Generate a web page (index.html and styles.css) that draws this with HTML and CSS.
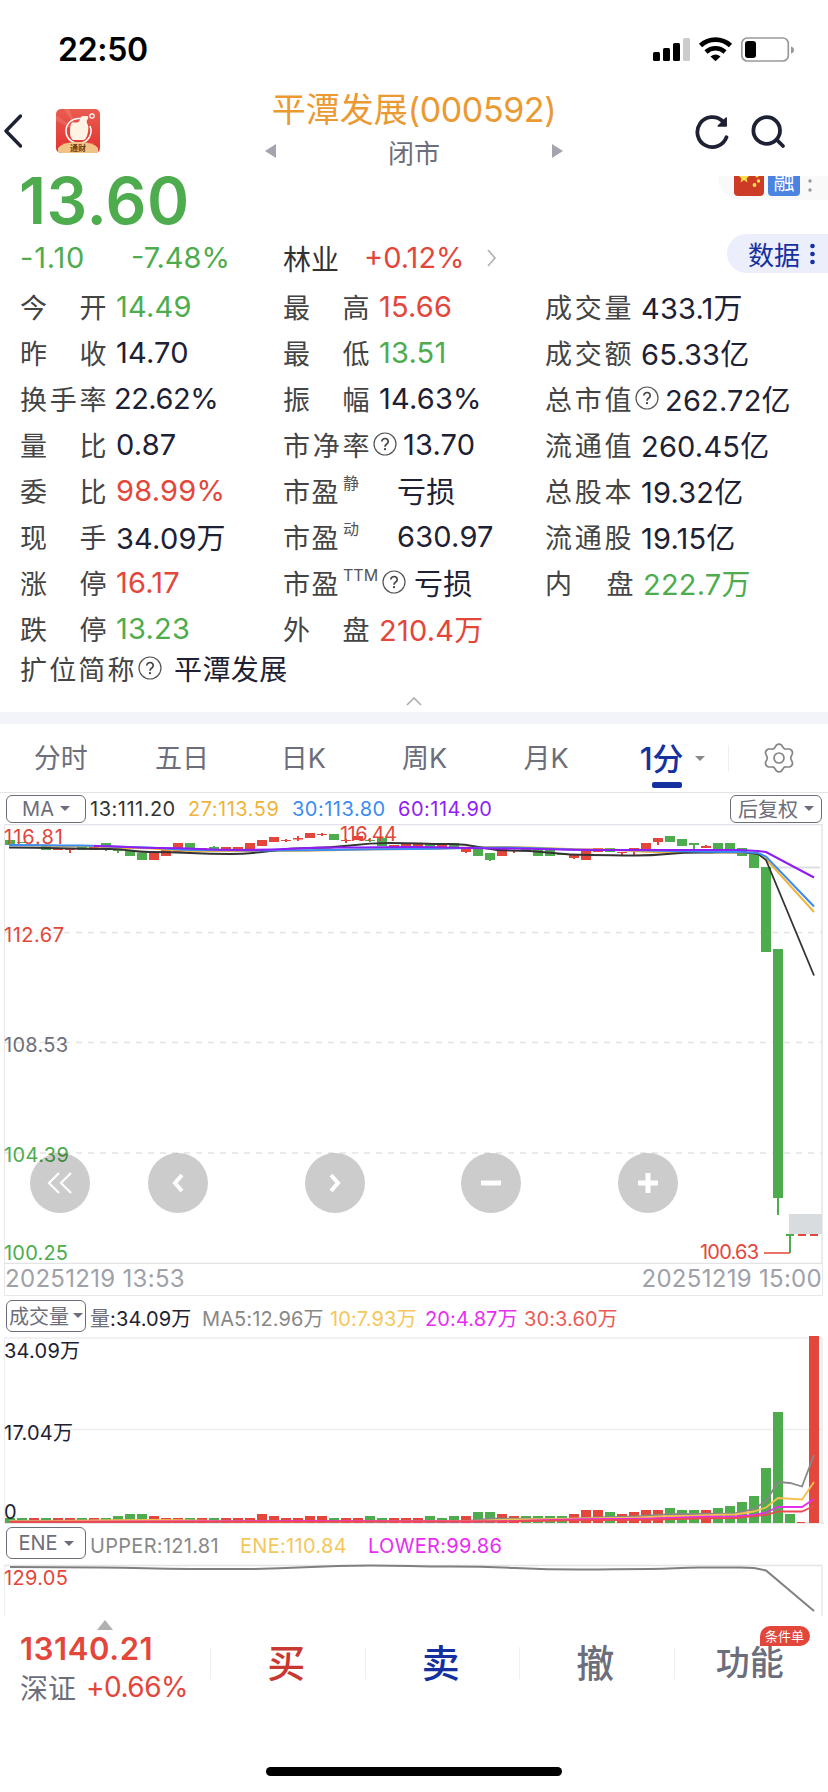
FILE: index.html
```
<!DOCTYPE html>
<html lang="zh-CN">
<head>
    <meta charset="UTF-8">
    <meta name="viewport" content="width=device-width, initial-scale=1.0">
    <title>平潭发展(000592)</title>
    <link rel="stylesheet" href="styles.css">
</head>
<body>
    <svg width="0" height="0" class="defs">
        <symbol id="help" viewBox="0 0 24 24">
            <circle cx="12" cy="12" r="11" fill="none" stroke="#555" stroke-width="1.2"/>
            <path d="M8.8 9.6a3.2 3 0 1 1 5 2.4c-1.2.8-1.8 1.3-1.8 2.7" fill="none" stroke="#444" stroke-width="1.7"/>
            <circle cx="12" cy="17.2" r="1.15" fill="#444"/>
        </symbol>
    </svg>

    <!-- 状态栏 -->
    <div class="status-bar">
        <span class="clock">22:50</span>
        <svg class="status-icons" width="142" height="26" viewBox="0 0 142 26">
            <rect x="0" y="15" width="7" height="9" rx="1.5"/>
            <rect x="10" y="11" width="7" height="13" rx="1.5"/>
            <rect x="20" y="6" width="7" height="18" rx="1.5"/>
            <rect x="30" y="1" width="7" height="23" rx="1.5" fill="#ccc"/>
            <path d="M47.5 8.5a22 22 0 0 1 30 0" fill="none" stroke="#000" stroke-width="4.8"/>
            <path d="M53 15a14 14 0 0 1 19 0" fill="none" stroke="#000" stroke-width="4.5"/>
            <path d="M57.5 19.5q5-4 10 0l-5 4.8z"/>
            <rect x="88.8" y="1" width="46.5" height="23" rx="5.5" fill="none" stroke="#999" stroke-width="1.7"/>
            <rect x="92" y="4" width="11" height="17" rx="3"/>
            <path d="M138 9.5q3 1 3 3.5t-3 3.5z" fill="#999"/>
        </svg>
    </div>

    <!-- 顶部导航 -->
    <header class="nav">
        <div class="nav-left">
            <svg class="back" width="20" height="36" viewBox="0 0 20 36">
                <path d="M18.5 3L4 18l14.5 15" fill="none" stroke="#1d2133" stroke-width="3.4" stroke-linecap="round" stroke-linejoin="round"/>
            </svg>
            <svg class="logo" width="44" height="44" viewBox="0 0 44 44">
                <defs>
                    <linearGradient id="lg" x1="0" y1="0" x2="0" y2="1">
                        <stop offset="0" stop-color="#ea5b50"/><stop offset="1" stop-color="#e2322f"/>
                    </linearGradient>
                    <clipPath id="lc"><rect width="44" height="44" rx="5"/></clipPath>
                </defs>
                <g clip-path="url(#lc)">
                    <rect width="44" height="44" fill="url(#lg)"/>
                    <path d="M22 22L8 0h5zM22 22L0 12v-6z" fill="#fff" opacity=".12"/>
                    <path d="M24 9.5A12.5 12.5 0 1 0 34 17" fill="none" stroke="#fff" stroke-width="1.5"/>
                    <path d="M16 13.500h5q3-.5 3-4 .5-2.500 3-2.500h4q2 .5 1 2.500-2 2-1 5 2 2 1 8-1 7-4 8.500H17q-3-2-3-8 0-8 2-9.500z" fill="#fff3e6"/>
                    <circle cx="36" cy="7" r="2.2" fill="none" stroke="#fff" stroke-width="1.2"/>
                    <path d="M2 44V39q4-6 20-6t20 6v5z" fill="#f0c486"/>
                    <text x="22" y="41.5" class="logo-text">通财</text>
                </g>
            </svg>
        </div>
        <div class="nav-title">
            <h1>平潭发展<span>(000592)</span></h1>
            <div class="nav-sub">
                <svg width="12" height="16" viewBox="0 0 12 16"><path d="M11 1v14L0 8z" fill="#a3a4ad"/></svg>
                <span>闭市</span>
                <svg width="12" height="16" viewBox="0 0 12 16"><path d="M1 1v14L12 8z" fill="#a3a4ad"/></svg>
            </div>
        </div>
        <div class="nav-right">
            <svg width="36" height="36" viewBox="0 0 36 36" fill="none" stroke="#1d2133" stroke-width="3.8" stroke-linecap="round">
                <path d="M32.5 23.2A15 15 0 1 1 28.5 7"/>
                <path d="M32.2 4v8h-8z" fill="#1d2133" stroke-width="1.5" stroke-linejoin="round"/>
            </svg>
            <svg width="36" height="36" viewBox="0 0 36 36" fill="none" stroke="#1d2133" stroke-width="3.8" stroke-linecap="round">
                <circle cx="16.7" cy="16.5" r="13.3"/><path d="M27 26l6 6"/>
            </svg>
        </div>
    </header>

    <!-- 报价 -->
    <section class="quote">
        <div class="price-row">
            <div class="price">13.60</div>
            <div class="tags">
                <svg width="30" height="20" viewBox="0 0 30 20">
                    <path d="M0 0h30v16q0 4-4 4H4q-4 0-4-4z" fill="#cd3a26"/>
                    <path d="M10 -4l1.5 4h3.5l-2.5 2.5 1 4-3.5-2.5-3.5 2.5 1-4L5 0h3.500z" fill="#ffe14d"/>
                    <circle cx="20.5" cy="9" r="1.9" fill="#ffe14d"/><circle cx="24.5" cy="5" r="1.7" fill="#ffe14d"/><circle cx="23" cy="0" r="1.6" fill="#ffe14d"/>
                </svg>
                <span class="tag-rong"><i>融</i></span>
                <svg width="6" height="20" viewBox="0 0 6 20" fill="#999"><circle cx="3" cy="5" r="1.7"/><circle cx="3" cy="14" r="1.7"/></svg>
            </div>
        </div>
        <div class="change-row">
            <span class="chg green">-1.10</span>
            <span class="pct green">-7.48%</span>
            <span class="industry">林业</span>
            <span class="ind-pct red">+0.12%</span>
            <svg width="10" height="18" viewBox="0 0 10 18"><path d="M1 1l7 8-7 8" fill="none" stroke="#b5b5b5" stroke-width="1.8"/></svg>
            <span class="data-btn">数据<svg width="7" height="22" viewBox="0 0 7 22" fill="#15309f"><circle cx="3.5" cy="3" r="2.3"/><circle cx="3.5" cy="11" r="2.3"/><circle cx="3.5" cy="19" r="2.3"/></svg></span>
        </div>
        <div class="grid">
            <div class="cell"><label>今 开</label><b class="green">14.49</b></div>
            <div class="cell"><label>最 高</label><b class="red">15.66</b></div>
            <div class="cell"><label>成交量</label><b>433.1万</b></div>

            <div class="cell"><label>昨 收</label><b>14.70</b></div>
            <div class="cell"><label>最 低</label><b class="green">13.51</b></div>
            <div class="cell"><label>成交额</label><b>65.33亿</b></div>

            <div class="cell"><label>换手率</label><b class="tight">22.62%</b></div>
            <div class="cell"><label>振 幅</label><b>14.63%</b></div>
            <div class="cell"><label>总市值</label><svg class="help"><use href="#help"/></svg><b>262.72亿</b></div>

            <div class="cell"><label>量 比</label><b>0.87</b></div>
            <div class="cell"><label>市净率</label><svg class="help"><use href="#help"/></svg><b>13.70</b></div>
            <div class="cell"><label>流通值</label><b>260.45亿</b></div>

            <div class="cell"><label>委 比</label><b class="red">98.99%</b></div>
            <div class="cell"><label class="pe">市盈</label><sup class="wide">静</sup><b>亏损</b></div>
            <div class="cell"><label>总股本</label><b>19.32亿</b></div>

            <div class="cell"><label>现 手</label><b>34.09万</b></div>
            <div class="cell"><label class="pe">市盈</label><sup class="wide">动</sup><b>630.97</b></div>
            <div class="cell"><label>流通股</label><b>19.15亿</b></div>

            <div class="cell"><label>涨 停</label><b class="red">16.17</b></div>
            <div class="cell"><label class="pe">市盈</label><sup>TTM</sup><svg class="help"><use href="#help"/></svg><b class="ttm">亏损</b></div>
            <div class="cell"><label class="last">内 盘</label><b class="green">222.7万</b></div>

            <div class="cell"><label>跌 停</label><b class="green">13.23</b></div>
            <div class="cell"><label>外 盘</label><b class="red">210.4万</b></div>
            <div class="cell"></div>
        </div>
        <div class="cell full-name"><label>扩位简称</label><svg class="help"><use href="#help"/></svg><b>平潭发展</b></div>
        <div class="fold">
            <svg width="16" height="9" viewBox="0 0 16 9"><path d="M1 8l7-7 7 7" fill="none" stroke="#aaa" stroke-width="1.5"/></svg>
        </div>
    </section>

    <!-- 周期 -->
    <nav class="tabs">
        <span>分时</span>
        <span>五日</span>
        <span>日K</span>
        <span>周K</span>
        <span>月K</span>
        <span class="active">1分<i class="arrow"></i></span>
        <div class="setting">
            <svg width="30" height="30" viewBox="0 0 30 30" fill="none" stroke="#858585" stroke-width="1.7" stroke-linejoin="round">
                <path d="M12.5 2Q15 .2 17.5 2L19.5 5Q20.5 6.2 22 6L25.5 6Q28.8 7 28.5 10.5L27 13.7Q26.5 15 27 16.3L28.5 19.5Q28.8 23 25.5 24L22 24Q20.5 23.8 19.5 25L17.5 28Q15 29.8 12.5 28L10.5 25Q9.5 23.8 8 24L4.5 24Q1.2 23 1.5 19.5L3 16.3Q3.5 15 3 13.7L1.5 10.5Q1.2 7 4.5 6L8 6Q9.5 6.2 10.5 5z"/>
                <circle cx="15" cy="15" r="5"/>
            </svg>
        </div>
    </nav>

    <!-- 主图 -->
    <div class="ind-row">
        <span class="select">MA<i class="arrow"></i></span>
        <span class="v ma13">13:111.20</span>
        <span class="v ma27">27:113.59</span>
        <span class="v ma30">30:113.80</span>
        <span class="v ma60">60:114.90</span>
        <span class="select fq">后复权<i class="arrow"></i></span>
    </div>
    <div class="chart-main">
        <svg id="kline" width="828" height="440" viewBox="0 824 828 440"></svg>
        <div class="controls">
            <button class="first"><svg width="28" height="34" viewBox="0 0 28 34"><path d="M13 7L3 17l10 10M25 7L15 17l10 10" stroke-width="2.2"/></svg></button>
            <button><svg width="28" height="34" viewBox="0 0 28 34"><path d="M18 9l-7 8 7 8" stroke-width="4"/></svg></button>
            <button><svg width="28" height="34" viewBox="0 0 28 34"><path d="M10 9l7 8-7 8" stroke-width="4"/></svg></button>
            <button><svg width="28" height="34" viewBox="0 0 28 34"><path d="M4 17h20" stroke-width="5"/></svg></button>
            <button><svg width="28" height="34" viewBox="0 0 28 34"><path d="M4 17h20M14 7v20" stroke-width="5"/></svg></button>
        </div>
    </div>
    <div class="dates"><span>20251219 13:53</span><span>20251219 15:00</span></div>

    <!-- 成交量 -->
    <div class="ind-row vol-row">
        <span class="select">成交量<i class="arrow"></i></span>
        <span class="v vol"><em>量</em>:34.09万</span>
        <span class="v vma5">MA5:12.96万</span>
        <span class="v vma10">10:7.93万</span>
        <span class="v vma20">20:4.87万</span>
        <span class="v vma30">30:3.60万</span>
    </div>
    <svg id="volume" class="chart" width="828" height="189" viewBox="0 1335 828 189"></svg>

    <!-- ENE -->
    <div class="ind-row ene-row">
        <span class="select">ENE<i class="arrow"></i></span>
        <span class="v upper">UPPER:121.81</span>
        <span class="v ene">ENE:110.84</span>
        <span class="v lower">LOWER:99.86</span>
    </div>
    <svg id="ene" class="chart" width="828" height="52" viewBox="0 1564 828 52"></svg>

    <!-- 底部 -->
    <footer class="bottom">
        <div class="index">
            <i class="up"></i>
            <div class="index-val">13140.21</div>
            <div class="index-pct"><em>深证</em><span>+0.66%</span></div>
        </div>
        <div class="action buy">买</div>
        <div class="action sell">卖</div>
        <div class="action cancel">撤</div>
        <div class="action more">功能<span class="badge">条件单</span></div>
    </footer>
    <div class="home-bar"></div>

    <script src="chart.js"></script>
</body>
</html>
```
FILE: styles.css
```
:root {
    --red: #e3463a;
    --green: #4eac4e;
    --dark: #1d2133;
    --label: #444;
    --gray: #6c6e7b;
    --blue: #15309f;
}
* {
    margin: 0;
    padding: 0;
    box-sizing: border-box;
}
body {
    width: 828px;
    height: 1792px;
    overflow: hidden;
    background: #fff;
    color: var(--dark);
    font-family: Inter, "Noto Sans CJK SC", sans-serif;
}
svg {
    display: block;
    flex: none;
}
.defs {
    position: absolute;
}
i, em {
    font-style: normal;
}
.red { color: var(--red) !important; }
.green { color: var(--green) !important; }

/* 状态栏 */
.status-bar {
    height: 88px;
    padding: 0 33px 0 58px;
    display: flex;
    justify-content: space-between;
}
.clock {
    margin-top: 30px;
    line-height: 40px;
    font-size: 32px;
    font-weight: 600;
    color: #000;
    letter-spacing: -0.3px;
}
.status-icons {
    margin-top: 37px;
}

/* 导航 */
.nav {
    height: 88px;
    display: grid;
    grid-template-columns: 200px 1fr 200px;
}
.nav-left {
    display: flex;
    padding: 21px 0 0 2px;
}
.back {
    margin-top: 4px;
}
.logo {
    margin-left: 34px;
}
.logo-text {
    font-size: 8px;
    font-weight: 700;
    fill: #6b3a10;
    text-anchor: middle;
}
.nav-title {
    text-align: center;
    white-space: nowrap;
}
.nav-title h1 {
    font-size: 34px;
    line-height: 44px;
    font-weight: 400;
    color: #eb9a33;
}
.nav-title h1 span {
    letter-spacing: -0.4px;
}
.nav-sub {
    display: flex;
    justify-content: space-between;
    align-items: center;
    width: 299px;
    height: 38px;
    margin: 0 auto;
    color: var(--gray);
    font-size: 26px;
}
.nav-right {
    display: flex;
    gap: 20px;
    padding: 26px 0 0 66px;
}

/* 报价 */
.quote {
    height: 536px;
}
.price-row {
    height: 54px;
    display: flex;
    justify-content: space-between;
}
.price {
    margin: -13px 0 0 19px;
    font-size: 64px;
    line-height: 76px;
    font-weight: 600;
    color: var(--green);
    letter-spacing: 0.5px;
}
.tags {
    width: 110px;
    height: 24px;
    padding-left: 16px;
    display: flex;
    background: #f9f9f9;
    border-bottom-left-radius: 24px;
}
.tag-rong {
    width: 32px;
    height: 20px;
    margin: 0 7px 0 4px;
    overflow: hidden;
    border-radius: 0 0 4px 4px;
    background: #4a83e0;
    color: #fff;
    text-align: center;
}
.tag-rong i {
    display: block;
    margin-top: -8px;
    font-size: 21px;
    line-height: 27px;
}
.change-row {
    height: 54px;
    display: flex;
    align-items: center;
    padding-left: 20px;
    font-size: 29px;
    letter-spacing: 0;
    white-space: nowrap;
}
.change-row > * {
    margin-top: 1px;
}
.change-row .chg { width: 111px; letter-spacing: 0.8px; }
.change-row .pct { width: 152px; }
.change-row .industry {
    width: 81px;
    color: #333;
    font-size: 28px;
}
.change-row .ind-pct { width: 123px; }
.data-btn {
    display: flex;
    align-items: center;
    justify-content: space-between;
    margin: -7px 0 0 auto !important;
    width: 101px;
    height: 39px;
    padding: 0 12px 0 21px;
    border-radius: 20px 0 0 20px;
    background: #eceefb;
    color: var(--blue);
    font-size: 26px;
}
.grid {
    display: grid;
    grid-template-columns: 263px 262px 1fr;
    grid-auto-rows: 46px;
    margin-top: -1px;
    padding-left: 20px;
}
.cell {
    display: flex;
    align-items: center;
    white-space: nowrap;
}
.cell label {
    width: 88px;
    font-size: 27px;
    color: var(--label);
    letter-spacing: 1.5px;
    text-align-last: justify;
}
.cell label.pe {
    width: 57px;
}
.cell label.last {
    width: 90px;
}
.cell b {
    margin-left: 8px;
    font-size: 29px;
    font-weight: 400;
    letter-spacing: 0.2px;
}
.cell b.tight {
    margin-left: 6px;
    letter-spacing: -0.5px;
}
.cell .help {
    width: 24px;
    height: 24px;
    margin-left: 2px;
}
.cell .help + b {
    margin-left: 6px;
}
.cell sup + .help {
    margin-left: 4px;
}
.cell .help + b.ttm {
    margin-left: 8px;
}
.cell sup {
    align-self: flex-start;
    margin: 4px 0 0 3px;
    font-size: 16px;
    line-height: 24px;
    color: #555;
}
.cell sup.wide {
    width: 46px;
}
.full-name {
    height: 34px;
    padding-left: 20px;
}
.full-name label {
    width: 116px;
}
.full-name .help + b {
    margin-left: 12px;
    font-size: 28px;
    letter-spacing: 0.4px;
}
.fold {
    display: flex;
    justify-content: center;
    padding-top: 12px;
}

/* 周期 */
.tabs {
    height: 81px;
    border-top: 12px solid #f3f4f9;
    border-bottom: 1px solid #e4e4e6;
    display: flex;
    align-items: center;
    color: var(--gray);
    font-size: 27px;
}
.tabs span {
    width: 121.5px;
    margin-top: -3px;
    text-align: center;
}
.tabs .active {
    position: relative;
    display: flex;
    align-items: center;
    padding-left: 33px;
    color: var(--blue);
    font-size: 31px;
    font-weight: 500;
}
.tabs .active::after {
    content: "";
    position: absolute;
    left: 45px;
    bottom: -9px;
    width: 30px;
    height: 6px;
    border-radius: 2px;
    background: var(--blue);
}
.arrow {
    display: inline-block;
    border: 5px solid transparent;
    border-top-color: var(--gray);
    border-bottom: 0;
}
.tabs .arrow {
    margin: 3px 0 0 11px;
    border-top-color: #888;
}
.setting {
    height: 26px;
    display: flex;
    align-items: center;
    margin-left: auto;
    padding: 0 34px 0 35px;
    border-left: 1px solid #eee;
}

/* 指标行 */
.ind-row {
    height: 31px;
    display: flex;
    align-items: center;
    padding: 0 6px;
    font-size: 20px;
    letter-spacing: 0.5px;
    white-space: nowrap;
}
.select {
    display: flex;
    align-items: center;
    justify-content: center;
    gap: 6px;
    width: 80px;
    height: 28px;
    margin-right: 4px;
    border: 1.5px solid var(--gray);
    border-radius: 6px;
    color: var(--gray);
    font-size: 20px;
    letter-spacing: 0;
}
.fq {
    width: 92px;
    margin: 0 0 0 auto;
}
.ma13 { width: 98px; color: #333; }
.ma27 { width: 104px; color: #f0b43c; }
.ma30 { width: 106px; color: #3b8cf2; }
.ma60 { color: #8f1df5; }

.chart-main {
    position: relative;
    height: 440px;
}
.controls button {
    position: absolute;
    top: 329px;
    left: 148px;
    width: 60px;
    height: 60px;
    border: 0;
    border-radius: 50%;
    background: rgba(0, 0, 0, 0.2);
    display: flex;
    align-items: center;
    justify-content: center;
}
.controls .first { left: 30px; }
.controls button:nth-child(3) { left: 305px; }
.controls button:nth-child(4) { left: 461px; }
.controls button:nth-child(5) { left: 618px; }
.controls path {
    fill: none;
    stroke: #fff;
}
.dates {
    height: 32px;
    margin: 0 5px 0 4px;
    border: solid #e8e8ea;
    border-width: 0 1px 1.5px;
    display: flex;
    align-items: center;
    justify-content: space-between;
    color: #a0a1a8;
    font-size: 24px;
    line-height: 26px;
    letter-spacing: 0.3px;
    padding-bottom: 2px;
}

.vol-row {
    height: 39px;
    padding-top: 1px;
    letter-spacing: 0.1px;
}
.vol-row .select {
    height: 32px;
    gap: 4px;
    margin-top: -1px;
}
.vol-row .v { padding-top: 3px; }
.vol em { color: var(--gray); }
.vol { width: 112px; }
.vma5 { width: 128px; color: #888; }
.vma10 { width: 95px; color: #f5c75a; }
.vma20 { width: 99px; color: #e82df2; }
.vma30 { color: #eb5b55; }

.ene-row {
    height: 40px;
}
.ene-row .select {
    height: 32px;
    margin-top: -2px;
}
.ene-row .v { padding-top: 4px; letter-spacing: 0.3px; }
.upper { width: 150px; color: #888; }
.ene { width: 128px; color: #f5c75a; }
.lower { color: #e82df2; }

#kline text, #volume text, #ene text {
    font-size: 20px;
}

/* 底部 */
.bottom {
    height: 112px;
    display: flex;
    align-items: center;
    padding-bottom: 18px;
}
.index {
    width: 210px;
    padding-left: 20px;
}
.up {
    display: block;
    width: 16px;
    margin: 1px 0 0 77px;
    border: 8px solid transparent;
    border-top: 0;
    border-bottom: 10px solid #b0b0b0;
}
.index-val {
    font-size: 31px;
    line-height: 37px;
    font-weight: 600;
    color: var(--red);
    letter-spacing: 0.6px;
}
.index-pct {
    display: flex;
    align-items: center;
    height: 40px;
    font-size: 28px;
    letter-spacing: -0.5px;
    color: var(--red);
}
.index-pct em {
    width: 66px;
    color: var(--gray);
    letter-spacing: 0;
}
.action {
    position: relative;
    flex: 1;
    height: 32px;
    padding-right: 3px;
    border-left: 1px solid #eef0f4;
    display: flex;
    align-items: center;
    justify-content: center;
    font-size: 38px;
    line-height: 30px;
    font-weight: 500;
}
.buy { color: #c93830; }
.sell { color: #1430a0; }
.cancel { color: var(--gray); }
.more {
    color: var(--gray);
    font-size: 34px;
}
.badge {
    position: absolute;
    left: 85px;
    top: -21px;
    width: 50px;
    height: 20px;
    border-radius: 10px 10px 10px 0;
    background: var(--red);
    color: #fff;
    font-size: 13px;
    line-height: 20px;
    font-weight: 400;
    text-align: center;
}
.home-bar {
    width: 296px;
    height: 9px;
    margin: 39px auto 0;
    border-radius: 5px;
    background: #000;
}
```
FILE: chart.js
```
const RED = '#e3463a';
const GREEN = '#4eac4e';
const DARK = '#1d2133';

// [涨跌, 实体上, 实体下, 影线上, 影线下]
const candles = [
    ['g',840,845],['g',842,843],['g',844,846],['g',845,850],['r',848,850],['r',849,850,849,853],['g',847,850],['r',847,850],
    ['g',843,849,843,851],['g',850,851,849,853],['g',850,856],['g',853,860],['r',853,860],['r',850,856],['r',843,852],['g',843,849,843,852],
    ['r',848,850,848,852],['g',847,850,846,850],['r',847,849],['r',847,849],['r',843,850],['r',840,846],['r',837,842],['r',840,841,839,842],
    ['r',838,839.5,836,841],['r',833,838],['r',834,835,833,836],['g',834,840],['r',840,841,839,843],['r',836,840],['g',840,841,838,842],['g',838,846],
    ['r',845,847],['r',843,847],['r',843,847],['g',843,849],['r',845,847],['g',843,849],['r',849,852,849,853],['g',849,856],
    ['g',853,860,853,861],['r',849,856],['r',850,851,850,853],['g',849,851],['g',849,856],['g',849,856],['g',853,855],['r',855,858,855,859],
    ['r',849,860],['r',848,852],['g',848,852],['r',852,853,852,855],['r',848,850,848,855],['r',843,849],['r',838,842,838,845],['g',836,842],
    ['g',839,846],['g',843,845,843,849],['r',846,848,845,848],['g',843,849],['g',843,849],['g',848,856],['g',853,868],['g',867,952],
    ['g',949,1198,949,1215],['g',1234,1236,1234,1253],['r',1234,1236],['r',1234,1236]
];

const volumes = [5,5,5,5,5,5,5,5,5,7,9,9,7,5,5,5,5,5,5,5,5,9,7,5,5,7,7,5,5,5,7,5,5,5,
    5,7,5,7,7,11,11,9,7,7,7,7,7,9,13,13,11,9,11,13,13,15,13,13,13,15,17,21,27,55,111,9,1,187];
const volColors = 'ggrgrrgrgggg' + 'rrrgrgrrrrrrrrr' + 'grrggrrr' + 'gggrggrr' + 'gggg' + 'rrrgrrrr' + 'gggr' + 'ggggggg' + 'rr';

const X = i => 10 + 12 * i;
const rect = (x, y, w, h, c) => `<rect x="${x}" y="${y}" width="${w}" height="${h}" fill="${c}"/>`;
const line = (x1, y1, x2, y2, c, w = 1.5, dash = '') =>
    `<line x1="${x1}" y1="${y1}" x2="${x2}" y2="${y2}" stroke="${c}" stroke-width="${w}" stroke-dasharray="${dash}"/>`;
const text = (x, y, s, c, w) => `<text x="${x}" y="${y}" fill="${c}" textLength="${w}">${s}</text>`;

// 过点的平滑曲线
function curve(pts, color, w = 2) {
    let d = `M${pts[0]}`;
    for (let i = 1; i < pts.length; i++) {
        const [x0, y0] = pts[i - 1], [x1, y1] = pts[i];
        const mid = (x0 + x1) / 2;
        d += x1 > 745 ? `L${x1} ${y1}` : `C${mid} ${y0} ${mid} ${y1} ${x1} ${y1}`;
    }
    return `<path d="${d}" fill="none" stroke="${color}" stroke-width="${w}"/>`;
}

function drawKline() {
    let s = line(4, 824.5, 822, 824.5, '#e2e4ea') + line(4.5, 824, 4.5, 1264, '#e8e8ec', 1) + line(822, 824, 822, 1264, '#e2e4ea');
    s += line(4, 1263.5, 822, 1263.5, '#e4e4e8');
    [932.5, 1042.5, 1153].forEach(y => s += line(4, y, 822, y, '#e3e3e3', 1.5, '6 6'));
    s += line(770, 867.5, 820, 867.5, '#dcdfe2', 2);
    candles.forEach(([t, top, bottom, hi, lo], i) => {
        const c = t === 'r' ? RED : GREEN;
        const w = i > 64 ? 8 : 10;
        s += rect(X(i) - w / 2, top, w, bottom - top, c);
        if (hi) s += rect(X(i) - 1, hi, 2, lo - hi, c);
    });
    s += rect(789, 1214, 33, 20, '#d8dcdf');
    s += line(764, 1253, 790, 1253, RED);
    s += text(340, 841, '116.44', RED, 57);
    s += text(700, 1259, '100.63', RED, 59);
    s += curve([[9,845],[80,846],[130,848],[200,851],[270,851],[414,849],[500,847],[600,849.5],[660,852],[740,852.5],[758,854],[766,859],[814,912]], '#f0b43c');
    s += curve([[9,847.5],[110,849],[150,852],[230,854],[310,848],[390,843],[450,844],[510,850.5],[590,855],[635,855.5],[700,852.5],[740,852],[758,854],[766,860],[814,975.5]], '#333', 1.8);
    s += curve([[9,845],[80,845.5],[130,847],[200,850],[270,850.5],[414,849],[500,847.5],[600,850],[740,852],[758,853],[766,856.5],[814,906.5]], '#3b8cf2');
    s += curve([[94,846],[160,848],[240,850],[340,847.5],[414,847],[500,848.5],[600,850],[740,850],[758,851],[766,852],[814,877.5]], '#8f1df5', 2.2);
    s += text(4, 844, '116.81', RED, 59);
    s += text(4, 942, '112.67', RED, 60);
    s += text(4, 1052, '108.53', '#6c6e7b', 64);
    s += text(4, 1162, '104.39', GREEN, 65);
    s += text(4, 1260, '100.25', GREEN, 64);
    document.getElementById('kline').innerHTML = s;
}

function drawVolume() {
    let s = line(4, 1338, 822, 1338, '#ededef') + line(4, 1429.5, 822, 1429.5, '#ededef') + line(4, 1523, 824, 1523, '#e2e2e4');
    s += line(4.5, 1338, 4.5, 1523, '#eee', 1) + line(822, 1338, 822, 1523, '#e8e8ea');
    volumes.forEach((h, i) => s += rect(X(i) - 5, 1523 - h, i === 66 ? 8 : 10, h, volColors[i] === 'r' ? RED : GREEN));
    s += curve([[9,1521],[130,1520.5],[250,1521],[460,1521],[500,1518.5],[560,1519],[620,1517],[680,1514],[735,1513.5],[754,1509],[766,1501],[778,1482],[790,1483],[802,1486.5],[814,1455]], '#888', 1.8);
    s += curve([[9,1521.5],[150,1520],[250,1521.5],[470,1521],[520,1519.5],[620,1518],[680,1516],[735,1514.5],[754,1511.5],[766,1507.5],[778,1498],[802,1499.5],[814,1482]], '#f5c04e', 1.8);
    s += curve([[9,1522],[300,1521],[470,1521.5],[620,1519],[735,1516.5],[754,1515],[766,1512.5],[778,1507],[802,1507],[814,1499]], '#e82df2', 1.8);
    s += curve([[9,1522],[470,1521.5],[620,1520],[735,1518],[766,1515],[778,1511.5],[802,1511.5],[814,1506]], '#eb4b50', 1.8);
    s += text(4, 1519, '0', DARK, 11);
    s += text(4, 1358, '34.09万', DARK, 76);
    s += text(4, 1440, '17.04万', DARK, 69);
    document.getElementById('volume').innerHTML = s;
}

function drawEne() {
    let s = line(4, 1565.5, 822, 1565.5, '#e4e4e6') + line(4.5, 1565, 4.5, 1616, '#eee', 1) + line(822, 1565, 822, 1616, '#e8e8ea');
    s += curve([[10,1567],[100,1567.5],[190,1569],[240,1569],[370,1565.5],[450,1566.5],[580,1569.5],[650,1569],[700,1567.5],[740,1567.5],[754,1568],[766,1570.5],[814,1611]], '#808080', 2);
    s += text(4, 1585, '129.05', RED, 64);
    document.getElementById('ene').innerHTML = s;
}

drawKline();
drawVolume();
drawEne();
```
